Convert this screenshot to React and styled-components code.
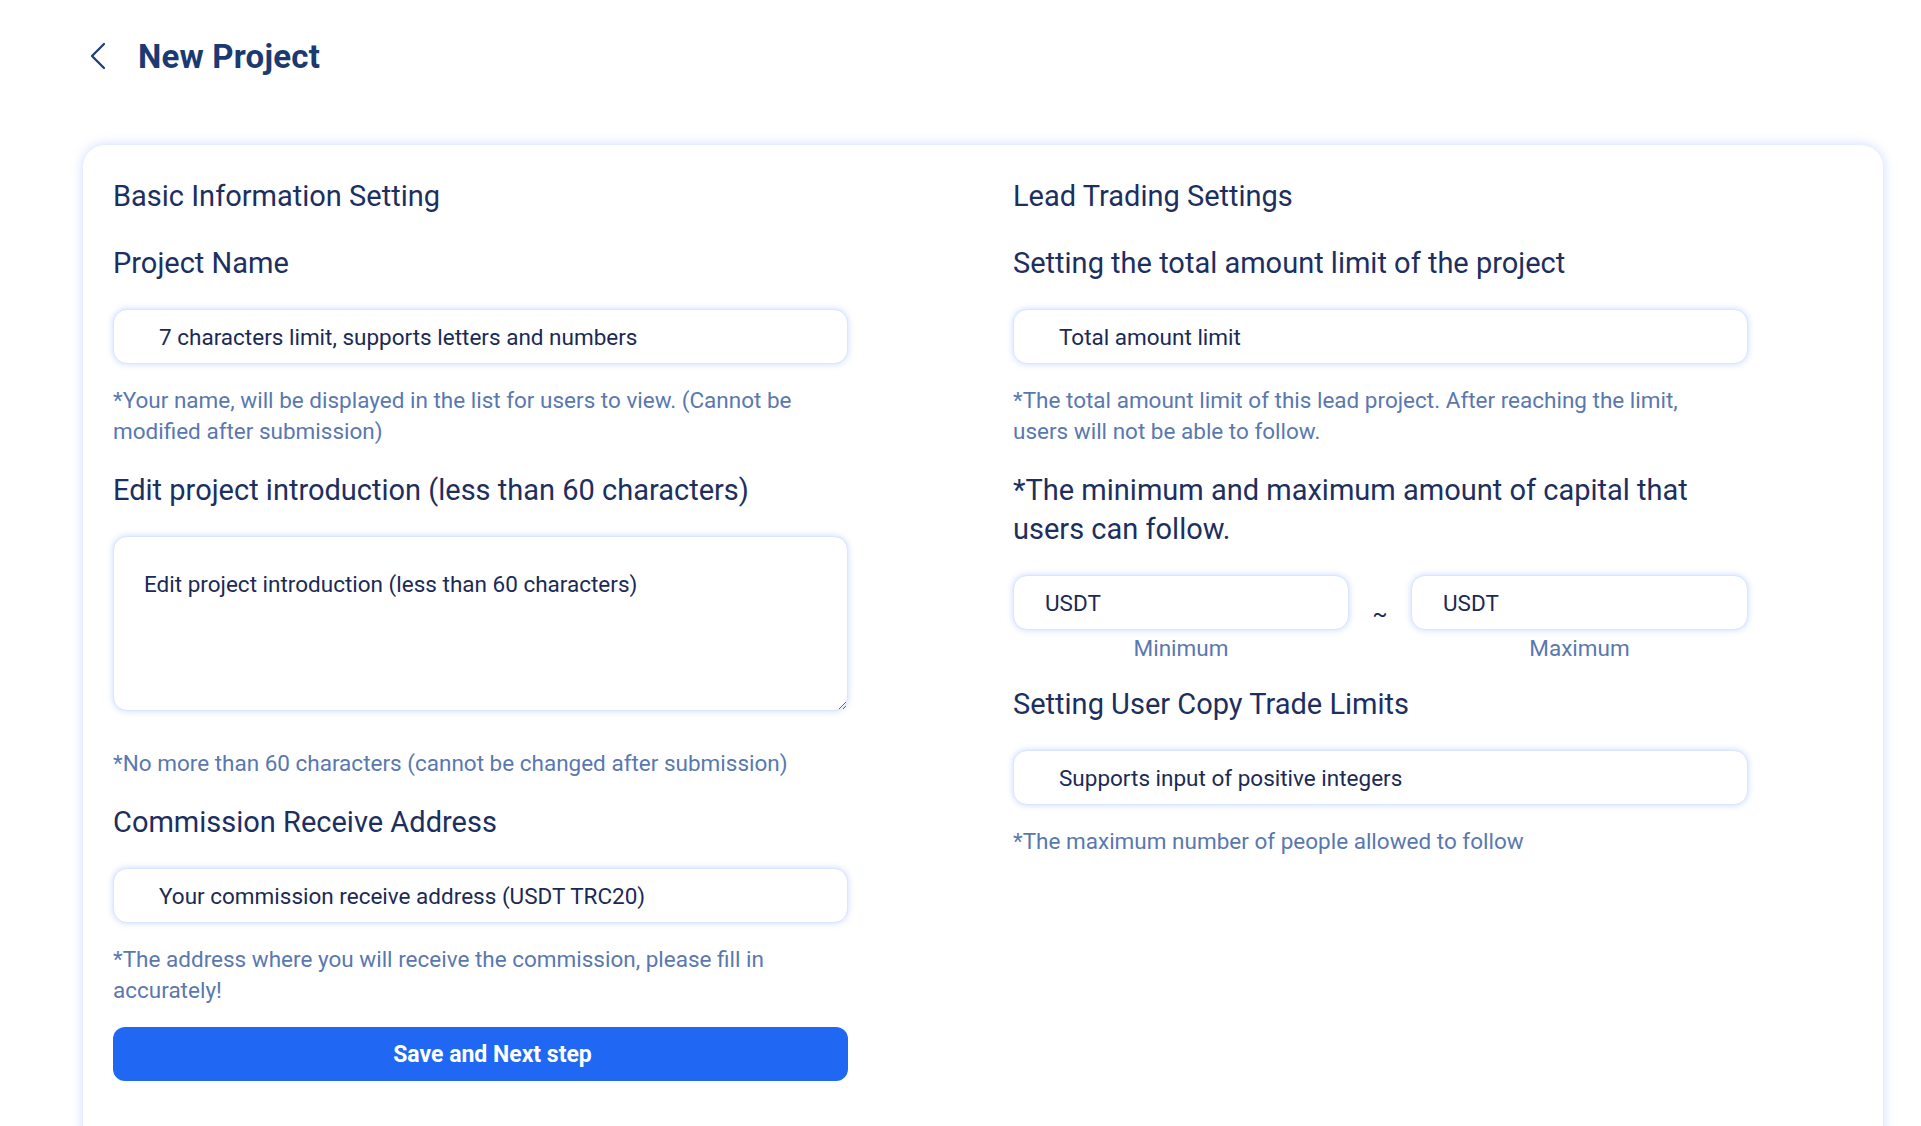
import React from "react";
import styled, { createGlobalStyle } from "styled-components";

const Global = createGlobalStyle`
  html, body { margin: 0; padding: 0; background: #ffffff; }
  body { font-family: Roboto, "Liberation Sans", sans-serif; }
  * { box-sizing: border-box; }
`;

const Page = styled.div`
  width: 1921px;
  min-height: 1126px;
  overflow: hidden;
`;

const Header = styled.header`
  display: flex;
  align-items: center;
  height: 112px;
  padding-left: 86px;
  gap: 28px;
`;

const BackButton = styled.button`
  display: flex;
  align-items: center;
  justify-content: center;
  width: 24px;
  height: 30px;
  padding: 0;
  border: none;
  background: transparent;
  cursor: pointer;
`;

const Title = styled.h1`
  margin: 0;
  font-size: 33px;
  font-weight: 700;
  color: #1b3a72;
  letter-spacing: 0.2px;
`;

const Card = styled.main`
  margin: 33px 0 0 83px;
  width: 1800px;
  min-height: 1010px;
  background: #fff;
  border-radius: 22px;
  box-shadow: 0 0 12px rgba(64, 120, 255, 0.28);
  display: grid;
  grid-template-columns: 1fr 1fr;
  padding-top: 32px;
`;

const Column = styled.section`
  padding-left: 30px;
  display: flex;
  flex-direction: column;
  align-items: flex-start;
`;

const SectionTitle = styled.h2`
  margin: 0 0 28px;
  font-size: 29px;
  line-height: 39px;
  font-weight: 400;
  color: #1c2f5f;
`;

const Label = styled.h3`
  margin: 0 0 26px;
  font-size: 29px;
  line-height: 39px;
  font-weight: 400;
  color: #1c2f5f;
  width: 735px;
`;

const fieldBase = `
  font-family: Roboto, "Liberation Sans", sans-serif;
  font-size: 22.5px;
  color: #1b2a55;
  background: #fff;
  border: 1px solid #dbe6fd;
  border-radius: 14px;
  box-shadow: 0 0 6px rgba(70, 125, 255, 0.3);
  outline: none;
  &::placeholder { color: #1b2a55; opacity: 1; }
`;

const Input = styled.input`
  ${fieldBase}
  display: block;
  width: ${(p) => p.$width || "735px"};
  height: 55px;
  padding: 0 0 0 ${(p) => p.$pad || 45}px;
  margin: 0;
`;

const TextArea = styled.textarea`
  ${fieldBase}
  display: block;
  width: 735px;
  height: 175px;
  padding: 33px 30px;
  margin: 0 0 37px;
  resize: vertical;
  line-height: 28px;
`;

const Help = styled.p`
  margin: ${(p) => (p.$tight ? "21px 0 21px" : "21px 0 24px")};
  width: 700px;
  font-size: 22.5px;
  line-height: 31px;
  color: #5a78b0;
`;

const HelpAfterArea = styled(Help)`
  margin-top: 0;
  width: 735px;
`;

const RangeRow = styled.div`
  display: grid;
  grid-template-columns: 336px 62px 337px;
  width: 735px;
`;

const RangeField = styled.div`
  display: flex;
  flex-direction: column;
  align-items: center;
`;

const RangeLabel = styled.span`
  margin-top: 5px;
  font-size: 22.5px;
  line-height: 26px;
  color: #5a78b0;
`;

const Tilde = styled.span`
  display: flex;
  justify-content: center;
  padding-top: 26px;
  font-size: 22px;
  color: #1b2a55;
`;

const RangeWrap = styled.div`
  margin-bottom: 24px;
`;

const SubmitButton = styled.button`
  width: 735px;
  height: 54px;
  border: none;
  border-radius: 12px;
  background: #2068f3;
  color: #fff;
  font-family: Roboto, "Liberation Sans", sans-serif;
  font-size: 23px;
  font-weight: 700;
  cursor: pointer;
  padding-left: 30px;
`;

function ChevronLeft() {
  return (
    <svg width="18" height="28" viewBox="0 0 18 28" fill="none">
      <path d="M15 2 L3 14 L15 26" stroke="#1b3a72" strokeWidth="2.2" strokeLinecap="round" strokeLinejoin="round" />
    </svg>
  );
}

export default function App() {
  return (
    <Page>
      <Global />
      <Header>
        <BackButton aria-label="Back">
          <ChevronLeft />
        </BackButton>
        <Title>New Project</Title>
      </Header>
      <Card>
        <Column>
          <SectionTitle>Basic Information Setting</SectionTitle>
          <Label>Project Name</Label>
          <Input placeholder="7 characters limit, supports letters and numbers" />
          <Help>*Your name, will be displayed in the list for users to view. (Cannot be modified after submission)</Help>
          <Label>Edit project introduction (less than 60 characters)</Label>
          <TextArea placeholder="Edit project introduction (less than 60 characters)" />
          <HelpAfterArea>*No more than 60 characters (cannot be changed after submission)</HelpAfterArea>
          <Label>Commission Receive Address</Label>
          <Input placeholder="Your commission receive address (USDT TRC20)" />
          <Help $tight>*The address where you will receive the commission, please fill in accurately!</Help>
          <SubmitButton>Save and Next step</SubmitButton>
        </Column>
        <Column>
          <SectionTitle>Lead Trading Settings</SectionTitle>
          <Label>Setting the total amount limit of the project</Label>
          <Input placeholder="Total amount limit" />
          <Help>*The total amount limit of this lead project. After reaching the limit, users will not be able to follow.</Help>
          <Label>*The minimum and maximum amount of capital that users can follow.</Label>
          <RangeWrap>
            <RangeRow>
              <RangeField>
                <Input $width="336px" $pad={31} placeholder="USDT" />
                <RangeLabel>Minimum</RangeLabel>
              </RangeField>
              <Tilde>~</Tilde>
              <RangeField>
                <Input $width="337px" $pad={31} placeholder="USDT" />
                <RangeLabel>Maximum</RangeLabel>
              </RangeField>
            </RangeRow>
          </RangeWrap>
          <Label>Setting User Copy Trade Limits</Label>
          <Input placeholder="Supports input of positive integers" />
          <Help>*The maximum number of people allowed to follow</Help>
        </Column>
      </Card>
    </Page>
  );
}
